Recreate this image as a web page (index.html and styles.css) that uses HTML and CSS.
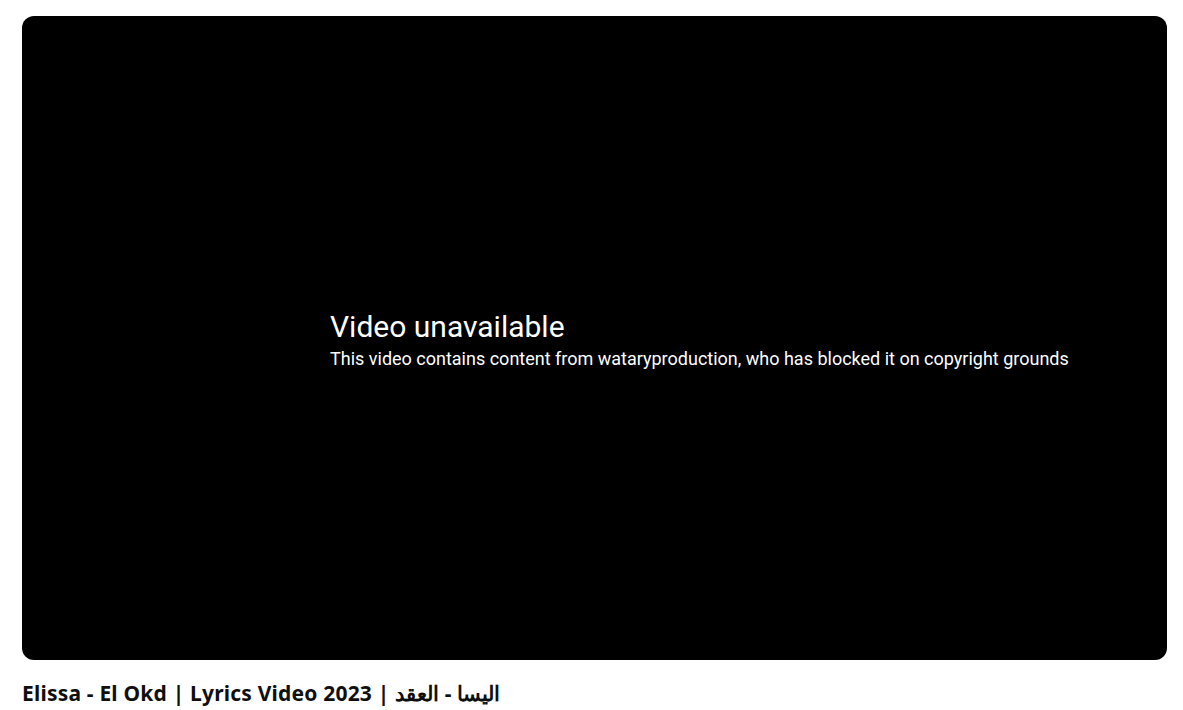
FILE: index.html
```html
<!DOCTYPE html>
<html lang="en">
<head>
  <meta charset="UTF-8">
  <meta name="viewport" content="width=device-width, initial-scale=1.0">
  <title>Elissa - El Okd | Lyrics Video 2023</title>
  <link rel="stylesheet" href="styles.css">
</head>
<body>
  <div class="watchPage">
    <div class="player">
      <div class="errorBox">
        <div class="errorTitle">Video unavailable</div>
        <div class="errorReason">This video contains content from wataryproduction, who has blocked it on copyright grounds</div>
      </div>
    </div>
    <h1 class="videoTitle">Elissa - El Okd | Lyrics Video 2023 | <span lang="ar">اليسا - العقد</span></h1>
  </div>
</body>
</html>
```

FILE: styles.css
```css
body{
  margin: 0;
  background: #fff;
  font-family: Roboto, "Noto Sans", Arial, sans-serif;
}
.watchPage{
  padding: 16px 16px 0 22px;
}
.player{
  height: 644px;
  background-color: #000;
  border-radius: 12px;
  display: flex;
  align-items: center;
  padding-left: 308px;
  box-sizing: border-box;
}
.errorBox{
  color: #fff;
  margin-top: 3px;
}
.errorTitle{
  font-size: 30px;
  line-height: 36px;
}
.errorReason{
  margin-top: 2px;
  font-size: 18px;
  line-height: 24px;
}
.videoTitle{
  margin: 0;
  padding-top: 19px;
  font-family: "Noto Sans", sans-serif;
  font-size: 21px;
  line-height: 28px;
  font-weight: 700;
  letter-spacing: 0.2px;
  color: #0f0f0f;
}
.videoTitle span{
  letter-spacing: 0;
}
```
